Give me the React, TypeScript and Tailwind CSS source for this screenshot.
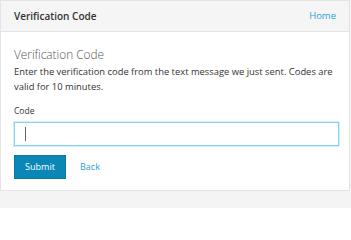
export default function App() {
  return (
    <div className="w-[351px] h-[208px] bg-[#f4f4f4] overflow-hidden" style={{ fontFamily: '"Open Sans", sans-serif' }}>
      <div className="w-[350px] bg-white border-x border-t border-b border-[#e4e4e4]">
        {/* Header */}
        <div className="h-[31px] flex items-center justify-between px-[13px] bg-[#f5f5f5] border-b border-[#e4e4e4]">
          <span className="text-[10px] font-semibold text-[#333]">Verification Code</span>
          <a href="#" className="text-[9.5px] text-[#2ca2d6]">Home</a>
        </div>

        {/* Body */}
        <div className="px-[13px] pt-[14px] pb-[11px]">
          <h2 className="text-[11.8px] leading-[16px] font-light text-[#555]">Verification Code</h2>
          <p className="mt-[2px] text-[9.4px] leading-[15px] text-[#333]">
            Enter the verification code from the text message we just sent. Codes are valid for 10 minutes.
          </p>
          <label className="block mt-[11px] text-[8.5px] leading-[12px] text-[#333]">Code</label>
          <div className="mt-[5px] h-[24px] w-[325px] border border-[#86d3f2] shadow-[0_0_0_1px_#d3effb] flex items-center pl-[10px]">
            <span className="w-px h-[14px] bg-[#666]" />
          </div>
          <div className="mt-[9px] flex items-center gap-[14px]">
            <button className="h-[24px] w-[52px] bg-[#0b87b6] border border-[#0a7aa6] text-white text-[9px]">
              Submit
            </button>
            <a href="#" className="text-[9px] text-[#2ca2d6]">Back</a>
          </div>
        </div>
      </div>
    </div>
  );
}
